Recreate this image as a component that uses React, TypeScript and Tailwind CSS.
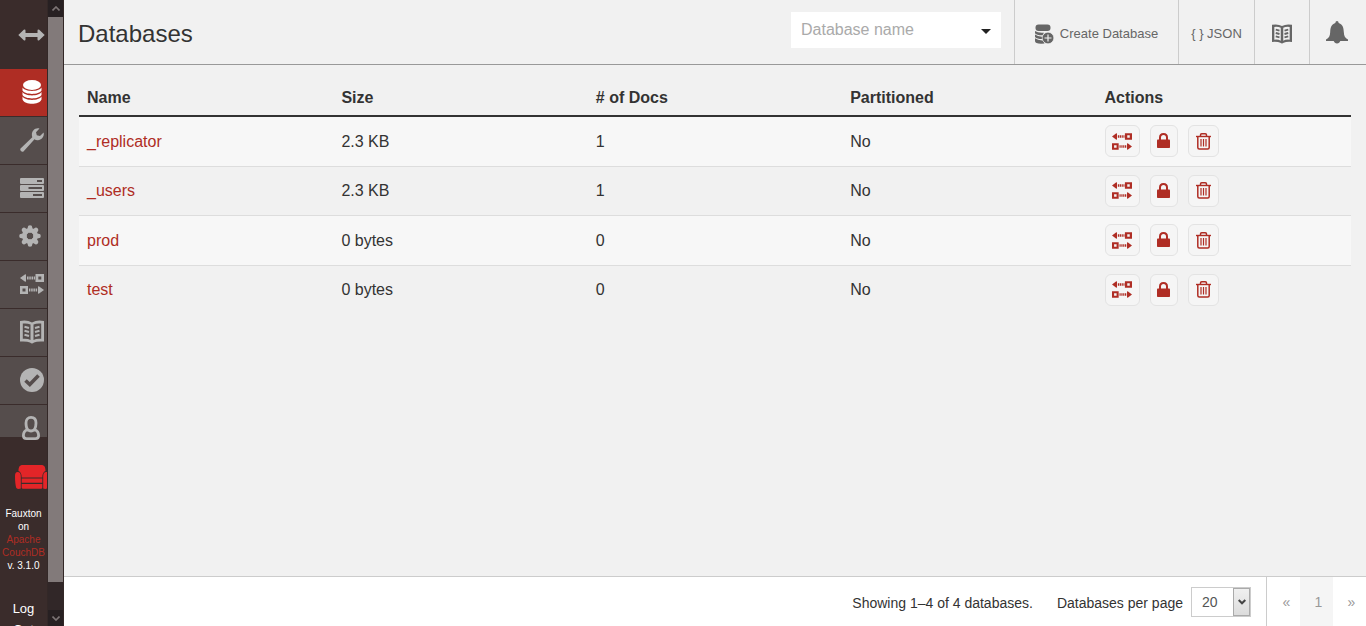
import type { ReactNode } from "react";
import { clsx } from "clsx";

type IconProps = { className?: string };

function ArrowsIcon({ className }: IconProps) {
	return (
		<svg viewBox="0 0 27 12" className={className} fill="currentColor" aria-hidden="true">
			<path d="M0.3 6 5.8 0.8Q7.5 0 7.5 1.8V4H19.5V1.8Q19.5 0 21.2 0.8L26.7 6 21.2 11.2Q19.5 12 19.5 10.2V8H7.5V10.2Q7.5 12 5.8 11.2Z" />
		</svg>
	);
}

function DatabaseIcon({ className }: IconProps) {
	return (
		<svg viewBox="0 0 20 24" className={className} fill="currentColor" aria-hidden="true">
			<ellipse cx="10" cy="5" rx="9" ry="5" />
			<path d="M0.5 7.5C3 12 17 12 19.5 7.5V10.5C17 15 3 15 0.5 10.5Z" />
			<path d="M0.5 12C3 16.5 17 16.5 19.5 12V15C17 19.5 3 19.5 0.5 15Z" />
			<path d="M0.5 16.5C3 21 17 21 19.5 16.5V19.5C17 25.3 3 25.3 0.5 19.5Z" />
		</svg>
	);
}

function DatabasePlusIcon({ className }: IconProps) {
	return (
		<svg viewBox="0 0 19 20" className={className} fill="currentColor" aria-hidden="true">
			<rect x="0.5" y="0.5" width="15" height="6.5" rx="3" />
			<path d="M0 7Q3 9.2 9 8.7L7.5 11.3Q2 11.5 0 9.3Z" />
			<path d="M0 10.6Q3 12.9 8 12.6L7.5 15.1Q2 15.2 0 13Z" />
			<path d="M0 14.3Q3 16.6 8 16.4L9.5 19.5Q0 20.3 0 17Z" />
			<circle cx="13" cy="14" r="5.8" stroke="#f1f1f1" strokeWidth="0.6" />
			<path d="M13 10.5v7M9.5 14h7" stroke="#f1f1f1" strokeWidth="1.2" />
		</svg>
	);
}

function WrenchIcon({ className }: IconProps) {
	return (
		<svg viewBox="0 0 24 24" className={className} fill="currentColor" aria-hidden="true">
			<path d="M19.5 0.5 16 4.2 16.8 7.3 20 8 23.6 4.5C24.7 8.5 21.5 12.5 17.5 12.2 16.3 12.2 15.3 11.8 14.5 11.3L3.7 23.2C2 25-1 22 0.8 20.2L12.3 9.2C10.5 4 14.5-0.9 19.5 0.5Z" />
		</svg>
	);
}

function ServersIcon({ className }: IconProps) {
	return (
		<svg viewBox="0 0 24 20" className={className} fill="currentColor" aria-hidden="true">
			<path
				fillRule="evenodd"
				d="M1 0H23Q24 0 24 1V5Q24 6 23 6H1Q0 6 0 5V1Q0 0 1 0ZM17 2V4H22V2ZM1 7H23Q24 7 24 8V12Q24 13 23 13H1Q0 13 0 12V8Q0 7 1 7ZM8.5 9V11H22V9ZM1 14H23Q24 14 24 15V19Q24 20 23 20H1Q0 20 0 19V15Q0 14 1 14ZM13 16V18H22V16Z"
			/>
		</svg>
	);
}

function GearIcon({ className }: IconProps) {
	return (
		<svg viewBox="0 0 22 22" className={className} aria-hidden="true">
			<g stroke="currentColor" strokeWidth="4.6" strokeLinecap="round">
				<path d="M11 2.5v3M11 16.5v3M2.5 11h3M16.5 11h3" />
				<path d="M5 5l2 2M15 15l2 2M5 17l2-2M15 7l2-2" />
			</g>
			<circle cx="11" cy="11" r="5.7" fill="none" stroke="currentColor" strokeWidth="4.6" />
		</svg>
	);
}

function ReplicationIcon({ className }: IconProps) {
	return (
		<svg viewBox="0 0 24 20" className={className} fill="currentColor" aria-hidden="true">
			<path d="M0 4 5.2 0.2Q6 0 6 1V7Q6 8 5.2 7.8Z" />
			<path d="M7 2.5h1.6v3H7zM9.3 2.5h1.5v3H9.3zM11.5 2.5h1.5v3h-1.5zM13.7 2.5h1.3v3h-1.3z" />
			<path fillRule="evenodd" d="M15.5 0h8.5v8h-8.5zM18.3 2.5v3h3v-3z" />
			<path fillRule="evenodd" d="M0 12h8v8H0zM2.5 14.5v3h3v-3z" />
			<path d="M9 14.5h1.4v3H9zM11.2 14.5h1.5v3h-1.5zM13.4 14.5h1.5v3h-1.5zM15.6 14.5h1.5v3h-1.5z" />
			<path d="M24 16 18.8 12.2Q18 12 18 13V19Q18 20 18.8 19.8Z" />
		</svg>
	);
}

function BookIcon({ className }: IconProps) {
	return (
		<svg viewBox="0 0 24 24" className={className} aria-hidden="true">
			<path
				fill="currentColor"
				fillRule="evenodd"
				d="M0 1Q7-0.5 12 2.5 17-0.5 24 1V21.5Q17 21 14 22.5 12 24.5 10 22.5 7 21 0 21.5ZM2.8 3.5V18.8Q7.5 18.2 10.5 20V4.5Q7.5 3 2.8 3.5ZM21.2 3.5Q16.5 3 13.5 4.5V20Q16.5 18.2 21.2 18.8Z"
			/>
			<path
				fill="none"
				stroke="currentColor"
				strokeWidth="2.2"
				d="M4.5 6.8 9 8M4.5 10.8 9 12M4.5 14.8 9 16M19.5 6.8 15 8M19.5 10.8 15 12M19.5 14.8 15 16"
			/>
		</svg>
	);
}

function CheckIcon({ className }: IconProps) {
	return (
		<svg viewBox="0 0 24 24" className={className} aria-hidden="true">
			<circle cx="12" cy="12" r="12" fill="currentColor" />
			<path d="M5.5 12.5 9.8 16.5 18.5 7.5" fill="none" stroke="#554d4c" strokeWidth="3.6" />
		</svg>
	);
}

function UserIcon({ className }: IconProps) {
	return (
		<svg viewBox="0 0 18 24" className={className} fill="none" stroke="currentColor" strokeWidth="2.8" aria-hidden="true">
			<path d="M5.5 13.5C4.3 12 4 10 4 7 4 3.500 6 1.400 9 1.400S14 3.500 14 7C14 10 13.700 12 12.500 13.500" />
			<path d="M5.500 13.500C3 14.500 1.400 17 1.400 19.500 1.400 21.800 2.200 22.600 4.500 22.600H13.500C15.800 22.600 16.600 21.800 16.600 19.500 16.600 17 15 14.500 12.500 13.500Q9 16.500 5.500 13.500Z" />
		</svg>
	);
}

function CouchIcon({ className }: IconProps) {
	return (
		<svg viewBox="0 0 34 24" className={className} fill="currentColor" aria-hidden="true">
			<path d="M3.5 6C3.5 1.5 5 0 8 0H26C29 0 30.5 1.500 30.500 6Q27.300 7 27.300 12.500H6.700Q6.700 7 3.500 6Z" />
			<path d="M6.700 13.500H27.300V17.800H6.700ZM6.700 19H27.300V22.500Q27.300 23.700 26 23.700H8Q6.700 23.700 6.700 22.500Z" />
			<path d="M2.600 7Q5.800 7.200 5.800 11V23.500Q3 24.500 1.300 23 0 19 0 11 0 7 2.600 7ZM31.400 7Q28.200 7.200 28.200 11V23.500Q31 24.500 32.700 23 34 19 34 11 34 7 31.400 7Z" />
		</svg>
	);
}

function LockIcon({ className }: IconProps) {
	return (
		<svg viewBox="0 0 13 16" className={className} aria-hidden="true">
			<rect y="6.5" width="13" height="8.5" rx="0.8" fill="currentColor" />
			<path d="M3 7.5V4.5Q3 1 6.5 1T10 4.5V7.5" fill="none" stroke="currentColor" strokeWidth="2" />
		</svg>
	);
}

function TrashIcon({ className }: IconProps) {
	return (
		<svg viewBox="0 0 15 17" className={className} fill="none" stroke="currentColor" aria-hidden="true">
			<path d="M0 3.5H15" strokeWidth="1.4" />
			<path d="M4.5 3V2Q4.5 0.8 5.7 0.8H9.3Q10.5 0.8 10.5 2V3M1.8 3.5V14.5Q1.8 16 3.3 16H11.7Q13.2 16 13.2 14.5V3.5" strokeWidth="1.5" />
			<path d="M5 6V13.5M7.5 6V13.5M10 6V13.5" strokeWidth="1.2" />
		</svg>
	);
}

function BellIcon({ className }: IconProps) {
	return (
		<svg viewBox="0 0 22 23" className={className} fill="currentColor" aria-hidden="true">
			<path d="M11 0Q12.5 0 12.7 2C17 3.5 17.5 7 17.8 11 18 15 19 17 22 18.5V20H0V18.5C3 17 4 15 4.2 11 4.5 7 5 3.5 9.3 2Q9.5 0 11 0Z" />
			<path d="M7.5 19.5H14.5Q13.5 22.5 11 22.5T7.5 19.5Z" />
		</svg>
	);
}

const navItems: { label: string; icon: ReactNode; active?: boolean }[] = [
	{ label: "Databases", icon: <DatabaseIcon className="h-6 w-5" />, active: true },
	{ label: "Setup", icon: <WrenchIcon className="size-6" /> },
	{ label: "Active Tasks", icon: <ServersIcon className="h-5 w-6" /> },
	{ label: "Configuration", icon: <GearIcon className="mr-1 size-[22px]" /> },
	{ label: "Replication", icon: <ReplicationIcon className="h-5 w-6" /> },
	{ label: "Documentation", icon: <BookIcon className="size-6" /> },
	{ label: "Verify", icon: <CheckIcon className="size-6" /> },
];

const databases = [
	{ name: "_replicator", size: "2.3 KB", docs: 1, partitioned: "No" },
	{ name: "_users", size: "2.3 KB", docs: 1, partitioned: "No" },
	{ name: "prod", size: "0 bytes", docs: 0, partitioned: "No" },
	{ name: "test", size: "0 bytes", docs: 0, partitioned: "No" },
];

const columns = ["Name", "Size", "# of Docs", "Partitioned", "Actions"];

function Sidebar() {
	return (
		<aside className="flex w-16 shrink-0 overflow-hidden border-r border-[#332827] bg-[#3a2c2b]">
			<div className="w-12 shrink-0 overflow-hidden border-r border-[#332827]">
				<button type="button" aria-label="Toggle menu" className="flex h-[69px] w-16 items-center justify-center pr-0.5 text-[#b4b4b4]">
					<ArrowsIcon className="h-3 w-[27px]" />
				</button>
				<nav className="text-[#b4b4b4]">
					{navItems.map((item) => (
						<a
							key={item.label}
							href="#"
							aria-label={item.label}
							className={clsx(
								"flex h-12 w-16 items-center justify-center border-b border-[#3a2c2b] pb-0.5",
								item.active ? "bg-[#af2d24] text-white" : "bg-[#554d4c]",
							)}
						>
							{item.icon}
						</a>
					))}
					<a href="#" aria-label="Your Account" className="flex h-8 w-16 items-start justify-center bg-[#554d4c] pr-0.5 pt-[11px]">
						<UserIcon className="h-6 w-[18px] shrink-0" />
					</a>
				</nav>
				<a href="#" aria-label="Fauxton" className="mt-7 flex w-16 justify-center text-[#e32528]">
					<CouchIcon className="h-6 w-[34px]" />
				</a>
				<p className="mt-[18px] text-center text-[10px] leading-[13px] text-white">
					Fauxton
					<br />
					on
					<br />
					<a href="#" className="text-[#af2d24]">
						Apache
						<br />
						CouchDB
					</a>
					<br />
					v. 3.1.0
				</p>
				<a href="#" className="mt-[26px] block text-center text-[13px] leading-[21px] text-white">
					Log
					<br />
					Out
				</a>
			</div>
			<div className="flex w-[15px] shrink-0 flex-col bg-[#312728]" aria-hidden="true">
				<div className="flex h-[17px] items-center justify-center bg-[#272022]">
					<svg viewBox="0 0 8 5" className="h-[5px] w-2" fill="none" stroke="#7d7576" strokeWidth="1.6">
						<path d="M0.5 4.5 4 1 7.5 4.5" />
					</svg>
				</div>
				<div className="grow bg-[#827a7a]" />
				<div className="h-7" />
				<div className="flex h-4 items-center justify-center bg-[#272022]">
					<svg viewBox="0 0 8 5" className="h-[5px] w-2" fill="none" stroke="#7d7576" strokeWidth="1.6">
						<path d="M0.5 0.5 4 4 7.5 0.5" />
					</svg>
				</div>
			</div>
		</aside>
	);
}

function Header() {
	return (
		<header className="flex h-[65px] shrink-0 border-b border-[#999] text-[#666]">
			<h1 className="grow self-center pl-[14px] pt-1 text-2xl text-[#333]">Databases</h1>
			<div className="mr-[13px] mt-3 flex h-9 w-[210px] items-center bg-white">
				<input
					type="text"
					aria-label="Database name"
					placeholder="Database name"
					className="h-full min-w-0 grow pl-[10px] text-base text-[#333] outline-none placeholder:text-[#aaa]"
				/>
				<button type="button" aria-label="Show databases" className="flex h-full w-[30px] items-center justify-center pr-1 pt-[3px]">
					<svg viewBox="0 0 10 5" className="h-[5px] w-[10px]" fill="#222" aria-hidden="true">
						<path d="M0 0H10L5 5Z" />
					</svg>
				</button>
			</div>
			<button type="button" className="flex w-[164px] items-center justify-center gap-[6px] border-l border-[#ccc] pt-1 text-[13px]">
				<DatabasePlusIcon className="h-5 w-[19px]" />
				Create Database
			</button>
			<a href="#" className="flex w-[76px] items-center justify-center border-l border-[#ccc] pt-[3px] text-[13px]">
				{"{ } JSON"}
			</a>
			<a href="#" aria-label="Documentation" className="flex w-[55px] items-center justify-center border-l border-[#ccc] pt-1">
				<BookIcon className="size-5" />
			</a>
			<button type="button" aria-label="Notifications" className="flex w-[57px] items-center justify-center border-l border-[#ccc] pr-0.5">
				<BellIcon className="h-[23px] w-[22px]" />
			</button>
		</header>
	);
}

function ActionButton({ label, className, children }: { label: string; className: string; children: ReactNode }) {
	return (
		<button
			type="button"
			aria-label={label}
			className={clsx("flex h-8 items-center justify-center rounded-md border border-[#e3e3e3] bg-[#f5f5f5]", className)}
		>
			{children}
		</button>
	);
}

function DatabaseTable() {
	return (
		<table className="w-full table-fixed text-left text-base text-[#333]">
			<thead>
				<tr className="h-[37px] border-b-2 border-[#333]">
					{columns.map((column) => (
						<th key={column} className="px-2 pt-0.5 font-bold">
							{column}
						</th>
					))}
				</tr>
			</thead>
			<tbody>
				{databases.map((db) => (
					<tr key={db.name} className="border-b border-[#ddd] last:border-b-0 odd:h-[50px] odd:bg-[#f7f7f7] even:h-[49px]">
						<td className="px-2 pt-px">
							<a href="#" className="text-[#af2d24]">
								{db.name}
							</a>
						</td>
						<td className="px-2 pt-px">{db.size}</td>
						<td className="px-2 pt-px">{db.docs}</td>
						<td className="px-2 pt-px">{db.partitioned}</td>
						<td className="px-2">
							<div className="flex gap-[10px] text-[#af2d24]">
								<ActionButton label={`Replicate ${db.name}`} className="w-[35px]">
									<ReplicationIcon className="h-[17px] w-5" />
								</ActionButton>
								<ActionButton label={`Set permissions for ${db.name}`} className="w-7">
									<LockIcon className="h-4 w-[13px]" />
								</ActionButton>
								<ActionButton label={`Delete ${db.name}`} className="w-[31px]">
									<TrashIcon className="h-[17px] w-[15px]" />
								</ActionButton>
							</div>
						</td>
					</tr>
				))}
			</tbody>
		</table>
	);
}

function Footer() {
	return (
		<footer className="flex h-[50px] shrink-0 items-center justify-end border-t border-[#ccc] bg-white text-sm text-[#333]">
			<span className="pt-0.5">Showing 1–4 of 4 databases.</span>
			<label htmlFor="per-page" className="ml-6 pt-0.5">
				Databases per page
			</label>
			<div className="relative ml-2 mr-[15px]">
				<select id="per-page" defaultValue="20" className="block h-[30px] w-[60px] appearance-none border border-[#ccc] bg-white pl-[10px] text-sm text-[#555]">
					<option>5</option>
					<option>10</option>
					<option>20</option>
					<option>50</option>
				</select>
				<span className="pointer-events-none absolute inset-y-px right-px flex w-[17px] items-center justify-center border border-[#aaa] bg-linear-to-b from-[#f0f0f0] to-[#dcdcdc]">
					<svg viewBox="0 0 8 6" className="h-[6px] w-2" fill="none" stroke="#444" strokeWidth="2" aria-hidden="true">
						<path d="M0.7 1 4 4.3 7.3 1" />
					</svg>
				</span>
			</div>
			<nav aria-label="Pages" className="flex h-full border-l border-[#ccc] text-[#999]">
				<a href="#" aria-label="Previous" className="flex w-[33px] items-center justify-center pl-[6px]">
					«
				</a>
				<a href="#" className="flex w-[33px] items-center justify-center bg-[#f5f5f5] pl-1">
					1
				</a>
				<a href="#" aria-label="Next" className="flex w-[33px] items-center justify-center pl-1">
					»
				</a>
			</nav>
		</footer>
	);
}

export default function App() {
	return (
		<div className="flex h-screen overflow-hidden bg-[#f1f1f1] font-['Liberation_Sans',Arial,sans-serif]">
			<Sidebar />
			<div className="flex min-w-0 grow flex-col">
				<Header />
				<main className="min-h-0 grow overflow-auto px-[15px] pt-[14px]">
					<DatabaseTable />
				</main>
				<Footer />
			</div>
		</div>
	);
}
